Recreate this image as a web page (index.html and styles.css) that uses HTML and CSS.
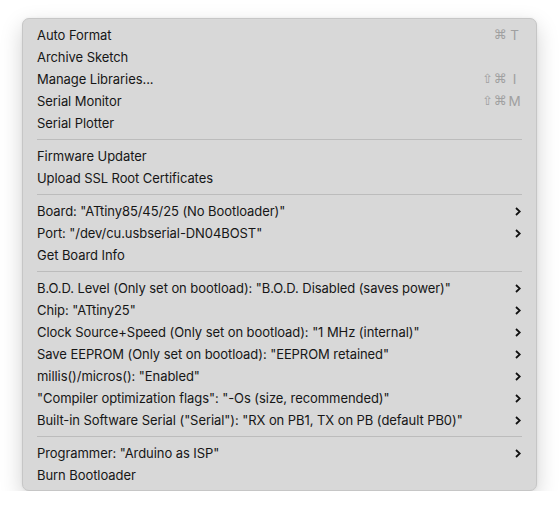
FILE: index.html
```html
<!DOCTYPE html>
<html>
<head>
<meta charset="utf-8">
<link rel="stylesheet" href="styles.css">
</head>
<body>
<div class="menu">
  <div class="row"><span class="label">Auto Format</span><span class="sc"><span class="mods">⌘</span><span class="key">T</span></span></div>
  <div class="row"><span class="label">Archive Sketch</span></div>
  <div class="row"><span class="label">Manage Libraries...</span><span class="sc"><span class="mods">⇧⌘</span><span class="key">I</span></span></div>
  <div class="row"><span class="label">Serial Monitor</span><span class="sc"><span class="mods">⇧⌘</span><span class="key">M</span></span></div>
  <div class="row"><span class="label">Serial Plotter</span></div>
  <div class="sep"></div>
  <div class="row"><span class="label">Firmware Updater</span></div>
  <div class="row"><span class="label">Upload SSL Root Certificates</span></div>
  <div class="sep"></div>
  <div class="row sub"><span class="label">Board: "ATtiny85/45/25 (No Bootloader)"</span><svg class="chev" viewBox="0 0 6 9" width="6" height="9"><path d="M1 1 L4.8 4.5 L1 8"/></svg></div>
  <div class="row sub"><span class="label">Port: "/dev/cu.usbserial-DN04BOST"</span><svg class="chev" viewBox="0 0 6 9" width="6" height="9"><path d="M1 1 L4.8 4.5 L1 8"/></svg></div>
  <div class="row"><span class="label">Get Board Info</span></div>
  <div class="sep"></div>
  <div class="row sub"><span class="label">B.O.D. Level (Only set on bootload): "B.O.D. Disabled (saves power)"</span><svg class="chev" viewBox="0 0 6 9" width="6" height="9"><path d="M1 1 L4.8 4.5 L1 8"/></svg></div>
  <div class="row sub"><span class="label">Chip: "ATtiny25"</span><svg class="chev" viewBox="0 0 6 9" width="6" height="9"><path d="M1 1 L4.8 4.5 L1 8"/></svg></div>
  <div class="row sub"><span class="label">Clock Source+Speed (Only set on bootload): "1 MHz (internal)"</span><svg class="chev" viewBox="0 0 6 9" width="6" height="9"><path d="M1 1 L4.8 4.5 L1 8"/></svg></div>
  <div class="row sub"><span class="label">Save EEPROM (Only set on bootload): "EEPROM retained"</span><svg class="chev" viewBox="0 0 6 9" width="6" height="9"><path d="M1 1 L4.8 4.5 L1 8"/></svg></div>
  <div class="row sub"><span class="label">millis()/micros(): "Enabled"</span><svg class="chev" viewBox="0 0 6 9" width="6" height="9"><path d="M1 1 L4.8 4.5 L1 8"/></svg></div>
  <div class="row sub"><span class="label">"Compiler optimization flags": "-Os (size, recommended)"</span><svg class="chev" viewBox="0 0 6 9" width="6" height="9"><path d="M1 1 L4.8 4.5 L1 8"/></svg></div>
  <div class="row sub"><span class="label">Built-in Software Serial ("Serial"): "RX on PB1, TX on PB (default PB0)"</span><svg class="chev" viewBox="0 0 6 9" width="6" height="9"><path d="M1 1 L4.8 4.5 L1 8"/></svg></div>
  <div class="sep"></div>
  <div class="row sub"><span class="label">Programmer: "Arduino as ISP"</span><svg class="chev" viewBox="0 0 6 9" width="6" height="9"><path d="M1 1 L4.8 4.5 L1 8"/></svg></div>
  <div class="row"><span class="label">Burn Bootloader</span></div>
</div>
</body>
</html>
```

FILE: styles.css
```css
html, body {
  margin: 0;
  padding: 0;
  background: #ffffff;
}
body {
  padding: 18px 0 0 22px;
  font-family: Inter, "Noto Sans", "DejaVu Sans", sans-serif;
  font-size: 13px;
  color: #161616;
}
.menu {
  box-sizing: border-box;
  width: 515px;
  height: 473px;
  background: #d8d8d8;
  border: 1px solid #c6c6c6;
  border-radius: 7px;
  padding: 5px 14px 4px 14px;
  box-shadow: 0 8px 22px rgba(0, 0, 0, 0.18), 0 0 3px rgba(0, 0, 0, 0.06);
}
.row {
  height: 22px;
  display: flex;
  align-items: center;
  justify-content: space-between;
  line-height: 22px;
  white-space: nowrap;
}
.label {
  letter-spacing: -0.07px;
}
.sep {
  height: 11px;
  display: flex;
  align-items: center;
}
.sep::before {
  content: "";
  display: block;
  width: 100%;
  height: 1px;
  background: #bcbcbc;
}
.sc {
  display: flex;
  align-items: center;
  color: #a0a0a0;
  font-family: "DejaVu Sans", sans-serif;
  font-size: 13px;
}
.mods {
  letter-spacing: 0.5px;
}
.key {
  width: 15px;
  text-align: center;
  font-family: Inter, "Noto Sans", sans-serif;
  font-size: 13.5px;
}
.chev {
  margin-right: 1px;
  fill: none;
  stroke: #111111;
  stroke-width: 1.8;
  stroke-linecap: butt;
  stroke-linejoin: miter;
}
```
